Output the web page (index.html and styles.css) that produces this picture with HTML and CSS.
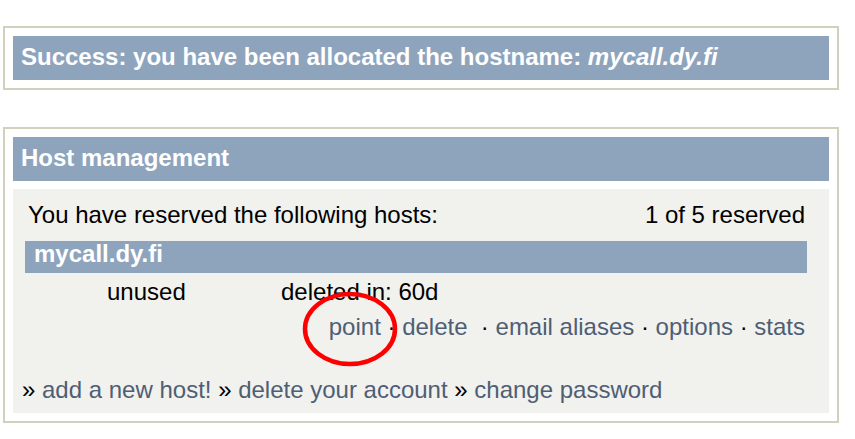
FILE: index.html
```html
<!DOCTYPE html>
<html lang="en">
<head>
    <meta charset="UTF-8">
    <title>Host management</title>
    <link rel="stylesheet" href="styles.css">
</head>
<body>
    <div class="page">
        <!-- Result message -->
        <div class="box">
            <div class="box-title">Success: you have been allocated the hostname: <em>mycall.dy.fi</em></div>
        </div>

        <!-- Host list -->
        <div class="box">
            <div class="box-title">Host management</div>
            <div class="box-body">
                <div class="hosts">
                    <div class="hosts-summary">
                        <span>You have reserved the following hosts:</span>
                        <span>1 of 5 reserved</span>
                    </div>
                    <div class="host-name">mycall.dy.fi</div>
                    <div class="host-status">
                        <span>unused</span>
                        <span>deleted in: 60d</span>
                    </div>
                    <div class="host-actions">
                        <span class="marked"><a href="#">point</a>
                            <svg class="marker" width="98" height="78" viewBox="0 0 98 78">
                                <ellipse cx="49" cy="39" rx="45" ry="35" fill="none" stroke="#f00" stroke-width="4.5"/>
                            </svg>
                        </span> · <a href="#">delete</a>&nbsp; · <a href="#">email aliases</a> · <a href="#">options</a> · <a href="#">stats</a>
                    </div>
                </div>
                <div class="account-links">
                    » <a href="#">add a new host!</a> » <a href="#">delete your account</a> » <a href="#">change password</a>
                </div>
            </div>
        </div>
    </div>
</body>
</html>
```
FILE: styles.css
```css
/* Page */
body {
    margin: 0;
    background-color: #fff;
    font-family: "Liberation Sans", Arial, sans-serif;
    font-size: 24px;
    color: #000;
}

.page {
    padding: 26px 0 0 3px;
}

a {
    color: #4f5e74;
    text-decoration: none;
}

/* Boxes */
.box {
    box-sizing: border-box;
    width: 836px;
    border: 2px solid #d2d1bd;
    padding: 8px;
    margin-bottom: 37px;
}

.box-title {
    height: 44px;
    line-height: 42px;
    padding: 0 8px;
    background-color: #8ea4bd;
    color: #fff;
    font-weight: bold;
}

.box-body {
    margin-top: 8px;
    padding: 12px 0 10px 0;
    background-color: #f1f1ed;
    line-height: 27px;
}

/* Host table */
.hosts {
    margin: 0 22px 0 12px;
}

.hosts-summary {
    display: flex;
    justify-content: space-between;
    padding: 0 2px 0 3px;
}

.host-name {
    margin-top: 13px;
    height: 32px;
    line-height: 25px;
    padding: 0 9px;
    background-color: #8ea4bd;
    color: #fff;
    font-weight: bold;
}

.host-status {
    display: grid;
    grid-template-columns: 174px auto;
    margin-top: 5px;
    padding-left: 82px;
}

.host-actions {
    margin-top: 8px;
    padding-right: 2px;
    text-align: right;
}

.marked {
    position: relative;
}

.marker {
    position: absolute;
    left: -28px;
    top: -23px;
}

.account-links {
    margin-top: 36px;
    padding-left: 9px;
}
```
